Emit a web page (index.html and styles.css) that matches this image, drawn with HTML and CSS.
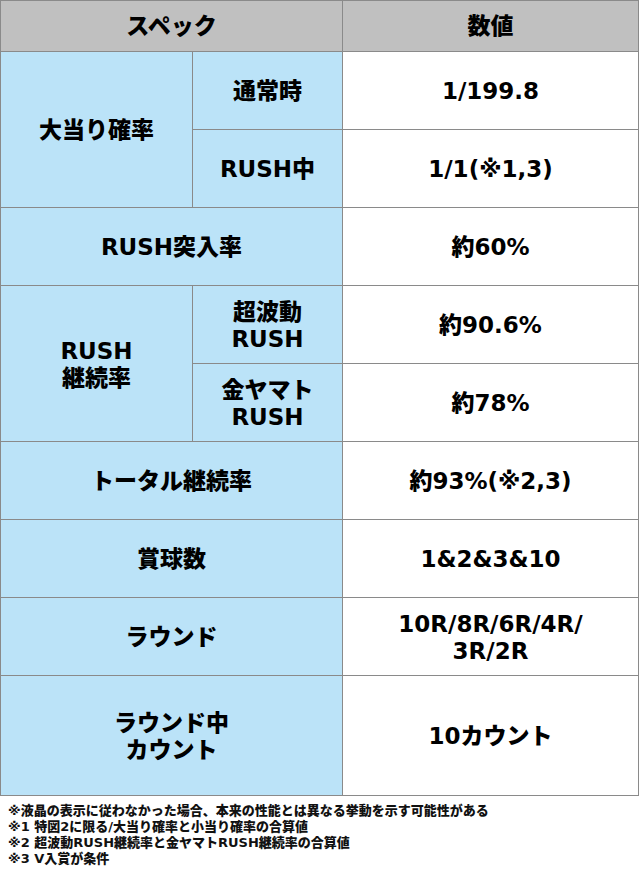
FILE: index.html
```html
<!DOCTYPE html>
<html lang="ja">
<head>
<meta charset="utf-8">
<title>スペック</title>
<link rel="stylesheet" href="styles.css">
</head>
<body>
<div class="spec">
  <div class="cell head span2">スペック</div>
  <div class="cell head">数値</div>

  <div class="cell label rows2">大当り確率</div>
  <div class="cell label">通常時</div>
  <div class="cell value">1/199.8</div>
  <div class="cell label">RUSH中</div>
  <div class="cell value">1/1(※1,3)</div>

  <div class="cell label span2">RUSH突入率</div>
  <div class="cell value">約60%</div>

  <div class="cell label rows2">RUSH<br>継続率</div>
  <div class="cell label">超波動<br>RUSH</div>
  <div class="cell value">約90.6%</div>
  <div class="cell label">金ヤマト<br>RUSH</div>
  <div class="cell value">約78%</div>

  <div class="cell label span2">トータル継続率</div>
  <div class="cell value">約93%(※2,3)</div>

  <div class="cell label span2">賞球数</div>
  <div class="cell value">1&amp;2&amp;3&amp;10</div>

  <div class="cell label span2">ラウンド</div>
  <div class="cell value">10R/8R/6R/4R/<br>3R/2R</div>

  <div class="cell label span2">ラウンド中<br>カウント</div>
  <div class="cell value">10カウント</div>
</div>
<div class="notes">
  <p>※液晶の表示に従わなかった場合、本来の性能とは異なる挙動を示す可能性がある</p>
  <p>※1 特図2に限る/大当り確率と小当り確率の合算値</p>
  <p>※2 超波動RUSH継続率と金ヤマトRUSH継続率の合算値</p>
  <p>※3 V入賞が条件</p>
</div>
</body>
</html>
```
FILE: styles.css
```css
html, body {
  margin: 0;
  padding: 0;
  background: #ffffff;
}

.spec {
  display: grid;
  grid-template-columns: 191px 149px 295px;
  grid-template-rows: 50px repeat(8, 77px) 119px;
  gap: 1px;
  padding: 1px;
  width: 637px;
  background: #8a8a8a;
  font-family: "DejaVu Sans", "Noto Sans CJK JP", sans-serif;
  font-weight: 900;
  font-size: 23px;
  line-height: 27px;
  color: #000;
}

.cell {
  display: flex;
  align-items: center;
  justify-content: center;
  text-align: center;
  padding-top: 2px;
}

.head {
  background: #c0c0c0;
  padding-top: 0;
}

.label {
  background: #bbe3f8;
}

.value {
  background: #ffffff;
}

.span2 {
  grid-column: span 2;
}

.rows2 {
  grid-row: span 2;
}

.notes {
  margin: 7px 0 0 8px;
  font-family: "DejaVu Sans", "Noto Sans CJK JP", sans-serif;
  font-weight: 900;
  font-size: 13px;
  line-height: 16px;
  color: #111;
}

.notes p {
  margin: 0;
}
```
